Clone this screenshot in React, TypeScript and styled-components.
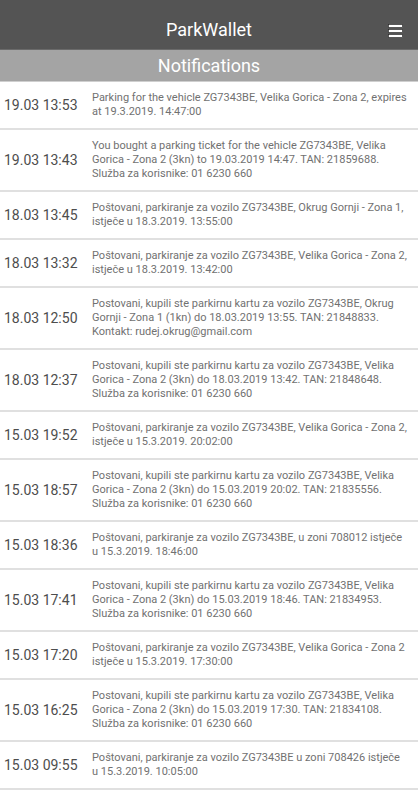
import styled, { createGlobalStyle } from 'styled-components';

const GlobalStyle = createGlobalStyle`
  html, body {
    margin: 0;
    padding: 0;
    background: #ffffff;
    font-family: Roboto, "Liberation Sans", sans-serif;
  }
`;

type Note = { date: string; text: string };

const notes: Note[] = [
  { date: '19.03 13:53', text: 'Parking for the vehicle ZG7343BE, Velika Gorica - Zona 2, expires at 19.3.2019. 14:47:00' },
  { date: '19.03 13:43', text: 'You bought a parking ticket for the vehicle ZG7343BE, Velika Gorica - Zona 2 (3kn) to 19.03.2019 14:47. TAN: 21859688. Služba za korisnike: 01 6230 660' },
  { date: '18.03 13:45', text: 'Poštovani, parkiranje za vozilo ZG7343BE, Okrug Gornji - Zona 1, istječe u 18.3.2019. 13:55:00' },
  { date: '18.03 13:32', text: 'Poštovani, parkiranje za vozilo ZG7343BE, Velika Gorica - Zona 2, istječe u 18.3.2019. 13:42:00' },
  { date: '18.03 12:50', text: 'Postovani, kupili ste parkirnu kartu za vozilo ZG7343BE, Okrug Gornji - Zona 1 (1kn) do 18.03.2019 13:55. TAN: 21848833. Kontakt: rudej.okrug@gmail.com' },
  { date: '18.03 12:37', text: 'Postovani, kupili ste parkirnu kartu za vozilo ZG7343BE, Velika Gorica - Zona 2 (3kn) do 18.03.2019 13:42. TAN: 21848648. Služba za korisnike: 01 6230 660' },
  { date: '15.03 19:52', text: 'Poštovani, parkiranje za vozilo ZG7343BE, Velika Gorica - Zona 2, istječe u 15.3.2019. 20:02:00' },
  { date: '15.03 18:57', text: 'Postovani, kupili ste parkirnu kartu za vozilo ZG7343BE, Velika Gorica - Zona 2 (3kn) do 15.03.2019 20:02. TAN: 21835556. Služba za korisnike: 01 6230 660' },
  { date: '15.03 18:36', text: 'Poštovani, parkiranje za vozilo ZG7343BE, u zoni 708012 istječe u 15.3.2019. 18:46:00' },
  { date: '15.03 17:41', text: 'Postovani, kupili ste parkirnu kartu za vozilo ZG7343BE, Velika Gorica - Zona 2 (3kn) do 15.03.2019 18:46. TAN: 21834953. Služba za korisnike: 01 6230 660' },
  { date: '15.03 17:20', text: 'Poštovani, parkiranje za vozilo ZG7343BE, Velika Gorica - Zona 2 istječe u 15.3.2019. 17:30:00' },
  { date: '15.03 16:25', text: 'Postovani, kupili ste parkirnu kartu za vozilo ZG7343BE, Velika Gorica - Zona 2 (3kn) do 15.03.2019 17:30. TAN: 21834108. Služba za korisnike: 01 6230 660' },
  { date: '15.03 09:55', text: 'Poštovani, parkiranje za vozilo ZG7343BE u zoni 708426 istječe u 15.3.2019. 10:05:00' },
];

const MenuIcon = () => (
  <svg width="15" height="14" viewBox="0 0 15 14">
    {[1, 6, 11].map((y) => (
      <rect key={y} x="0.5" y={y - 0.5} width="14" height="3" fill="#ffffff" stroke="#222" strokeWidth="0.6" />
    ))}
  </svg>
);

const App = () => {
  return (
    <>
      <GlobalStyle />
      <Page>
        <TopBar>
          <Title>ParkWallet</Title>
          <MenuButton>
            <MenuIcon />
          </MenuButton>
        </TopBar>
        <SectionBar>Notifications</SectionBar>
        <List>
          {notes.map((n) => (
            <Item key={n.date}>
              <DateCell>{n.date}</DateCell>
              <Message>{n.text}</Message>
            </Item>
          ))}
        </List>
      </Page>
    </>
  );
};

export default App;

// region STYLES

const Page = styled.div`
  width: 418px;
  min-height: 800px;
  background: #fff;
`;

const TopBar = styled.header`
  position: relative;
  height: 50px;
  box-sizing: border-box;
  padding-top: 9px;
  background: #545454;
  display: flex;
  align-items: center;
  justify-content: center;
  border-bottom: 1px solid #6a6a6a;
`;

const Title = styled.h1`
  margin: 0;
  color: #ffffff;
  font-size: 18px;
  font-weight: 400;
`;

const MenuButton = styled.div`
  position: absolute;
  right: 15px;
  top: 24px;
  display: flex;
`;

const SectionBar = styled.div`
  height: 31px;
  background: #a4a4a4;
  color: #ffffff;
  font-size: 18px;
  line-height: 31px;
  text-align: center;
  border-bottom: 1px solid #cfcfcf;
`;

const List = styled.div`
  display: flex;
  flex-direction: column;
`;

const Item = styled.div`
  display: grid;
  grid-template-columns: 88px 1fr;
  align-items: center;
  padding: 9px 10px 9px 4px;
  border-bottom: 2px solid #e0e0e0;
`;

const DateCell = styled.div`
  color: #4d4d4d;
  font-size: 14px;
  white-space: nowrap;
`;

const Message = styled.div`
  color: #717171;
  font-size: 11px;
  line-height: 14px;
`;

// endregion
